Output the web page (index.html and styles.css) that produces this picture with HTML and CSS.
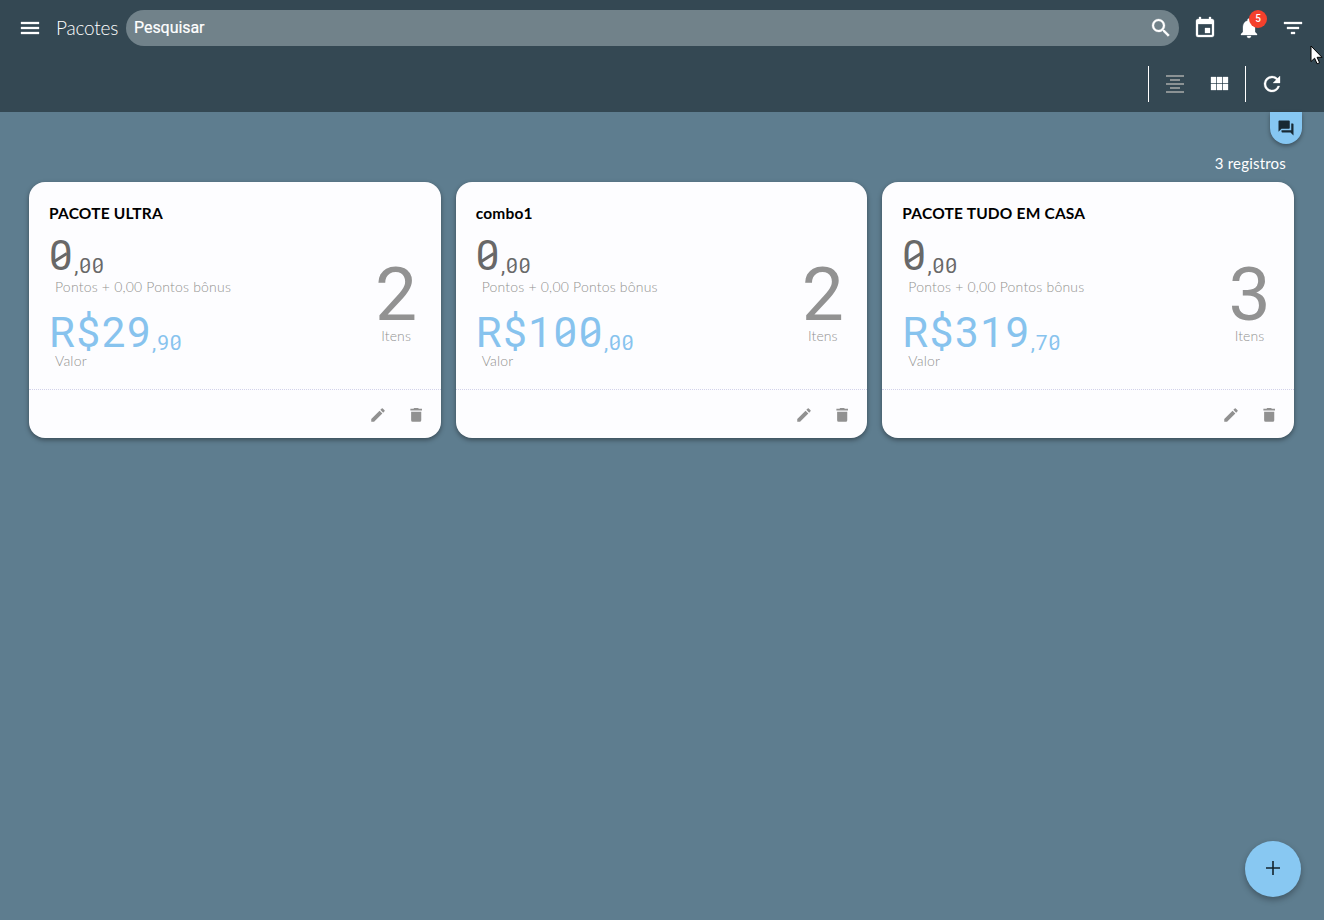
FILE: index.html
```html
<!DOCTYPE html>
<html lang="pt-BR">
<head>
<meta charset="utf-8">
<title>Pacotes</title>
<link rel="stylesheet" href="styles.css">
</head>
<body>
<svg class="defs" aria-hidden="true">
  <symbol id="edit" viewBox="0 0 24 24"><path d="M3 17.25V21h3.75L17.81 9.94l-3.75-3.75L3 17.25zM20.71 7.04a1 1 0 0 0 0-1.41l-2.34-2.34a1 1 0 0 0-1.41 0l-1.83 1.83 3.75 3.75 1.83-1.83z"/></symbol>
  <symbol id="trash" viewBox="0 0 24 24"><path d="M5.500 7.500V19a2 2 0 0 0 2 2h9.500a2 2 0 0 0 2-2V7.500zM20 3.800h-4.200l-1-1.300h-5.200l-1 1.300H4.500v2.200H20z"/></symbol>
</svg>
<header class="header">
  <div class="topbar">
    <svg class="icon menu" viewBox="0 0 24 24"><path d="M3 18h18v-2H3v2zm0-5h18v-2H3v2zm0-7v2h18V6H3z"/></svg>
    <h1 class="title">Pacotes</h1>
    <div class="search"><span class="placeholder">Pesquisar</span>
      <svg class="icon" viewBox="0 0 24 24"><path d="M15.5 14h-.79l-.28-.27A6.47 6.47 0 0 0 16 9.500 6.500 6.500 0 1 0 9.500 16c1.610 0 3.090-.590 4.230-1.570l.27.28v.79l5 4.990L20.490 19l-4.990-5zm-6 0C7.010 14 5 11.990 5 9.500S7.010 5 9.500 5 14 7.010 14 9.500 11.990 14 9.500 14z"/></svg>
    </div>
    <div class="actions">
      <svg class="icon" viewBox="0 0 24 24"><path d="M17 12h-5v5h5v-5zM16 1v2H8V1H6v2H5c-1.110 0-1.990.9-1.990 2L3 19a2 2 0 0 0 2 2h14c1.100 0 2-.9 2-2V5c0-1.100-.9-2-2-2h-1V1h-2zm3 18H5V8h14v11z"/></svg>
      <div class="bell"><svg class="icon" viewBox="0 0 24 24"><path d="M12 22c1.100 0 2-.9 2-2h-4a2 2 0 0 0 2 2zm6-6v-5c0-3.070-1.640-5.640-4.500-6.320V4a1.500 1.500 0 0 0-3 0v.68C7.630 5.360 6 7.920 6 11v5l-2 2v1h16v-1l-2-2z"/></svg><span class="badge">5</span></div>
      <svg class="icon" viewBox="0 0 24 24"><path d="M10 18h4v-2h-4v2zM3 6v2h18V6H3zm3 7h12v-2H6v2z"/></svg>
    </div>
  </div>
  <div class="toolbar">
    <span class="rule"></span>
    <svg class="icon dim" viewBox="0 0 24 24"><path d="M3 3h18v2H3zM7 7h10v2H7zM3 11h18v2H3zM7 15h10v2H7zM3 19h18v2H3z"/></svg>
    <svg class="icon grid" viewBox="0 0 24 24"><path d="M4 11h5V5H4v6zm0 7h5v-6H4v6zm6 0h5v-6h-5v6zm6 0h5v-6h-5v6zm-6-7h5V5h-5v6zm6-6v6h5V5h-5z"/></svg>
    <span class="rule second"></span>
    <svg class="icon" viewBox="0 0 24 24"><path d="M17.650 6.350A7.958 7.958 0 0 0 12 4a8 8 0 1 0 7.730 10h-2.080A5.990 5.990 0 0 1 12 18a6 6 0 1 1 0-12c1.660 0 3.140.69 4.220 1.780L13 11h7V4l-2.350 2.350z"/></svg>
  </div>
</header>
<main class="content">
  <div class="chatrow"><button class="chat" aria-label="Chat"><svg viewBox="0 0 24 24"><path d="M21 6h-2v9H6v2c0 .55.450 1 1 1h11l4 4V7c0-.55-.450-1-1-1zm-4 6V3c0-.55-.450-1-1-1H3c-.55 0-1 .450-1 1v14l4-4h10c.55 0 1-.450 1-1z"/></svg></button></div>
  <p class="count">3 registros</p>
  <section class="cards">
    <article class="card">
      <div class="body">
        <h2>PACOTE ULTRA</h2>
        <div class="cols">
          <div class="values">
            <div class="amount points"><span class="int"><span class="z">0</span></span><span class="dec">,<span class="z">0</span><span class="z">0</span></span></div>
            <div class="label">Pontos + 0,00 Pontos bônus</div>
            <div class="amount price"><span class="int">R$29</span><span class="dec">,9<span class="z">0</span></span></div>
            <div class="label short">Valor</div>
          </div>
          <div class="items"><div class="num">2</div><div class="itens">Itens</div></div>
        </div>
      </div>
      <footer><svg><use href="#edit"/></svg><svg><use href="#trash"/></svg></footer>
    </article>
    <article class="card">
      <div class="body">
        <h2>combo1</h2>
        <div class="cols">
          <div class="values">
            <div class="amount points"><span class="int"><span class="z">0</span></span><span class="dec">,<span class="z">0</span><span class="z">0</span></span></div>
            <div class="label">Pontos + 0,00 Pontos bônus</div>
            <div class="amount price"><span class="int">R$1<span class="z">0</span><span class="z">0</span></span><span class="dec">,<span class="z">0</span><span class="z">0</span></span></div>
            <div class="label short">Valor</div>
          </div>
          <div class="items"><div class="num">2</div><div class="itens">Itens</div></div>
        </div>
      </div>
      <footer><svg><use href="#edit"/></svg><svg><use href="#trash"/></svg></footer>
    </article>
    <article class="card">
      <div class="body">
        <h2>PACOTE TUDO EM CASA</h2>
        <div class="cols">
          <div class="values">
            <div class="amount points"><span class="int"><span class="z">0</span></span><span class="dec">,<span class="z">0</span><span class="z">0</span></span></div>
            <div class="label">Pontos + 0,00 Pontos bônus</div>
            <div class="amount price"><span class="int">R$319</span><span class="dec">,7<span class="z">0</span></span></div>
            <div class="label short">Valor</div>
          </div>
          <div class="items"><div class="num">3</div><div class="itens">Itens</div></div>
        </div>
      </div>
      <footer><svg><use href="#edit"/></svg><svg><use href="#trash"/></svg></footer>
    </article>
  </section>
</main>
<button class="fab" aria-label="Adicionar"><svg viewBox="0 0 24 24"><path d="M19 12.800h-6.200V19h-1.600v-6.200H5v-1.600h6.200V5h1.600v6.200H19z"/></svg></button>
<svg class="cursor" viewBox="0 0 13 20"><path d="M1 1v15.500l3.600-3.300 2.500 5.600 2.500-1.100-2.500-5.400H12z" fill="#fff" stroke="#000"/></svg>
</body>
</html>
```
FILE: styles.css
```css
* { box-sizing: border-box; }
body { margin: 0; min-height: 920px; overflow: hidden; background: #5e7d8f; font-family: Lato, sans-serif; color: #fff; }
h1, h2, p { margin: 0; }
button { border: 0; padding: 0; }
.defs { display: none; }
.header { height: 112px; background: #344853; }
.topbar { height: 56px; display: flex; align-items: center; padding: 0 19px 0 18px; }
.icon { width: 24px; height: 24px; fill: #fff; stroke: #fff; stroke-width: .3; flex: none; display: block; }
.title { width: 62px; margin-left: 14px; font-size: 19px; font-weight: 300; line-height: 24px; white-space: nowrap; letter-spacing: -.2px; }
.search { flex: 1; height: 36px; margin-left: 8px; margin-right: 14px; border-radius: 18px; background: #71828a; display: flex; align-items: center; justify-content: space-between; padding: 0 6px 0 8px; font: 400 16px/20px Roboto, sans-serif; }
.placeholder { letter-spacing: -.05px; -webkit-text-stroke: .2px #fff; }
.actions { display: flex; gap: 20px; }
.bell { position: relative; }
.badge { position: absolute; left: 12px; top: -6px; width: 18px; height: 18px; border-radius: 50%; background: #f4402c; font: 500 10px/18px Roboto, sans-serif; text-align: center; }
.toolbar { height: 56px; display: flex; align-items: center; justify-content: flex-end; padding-right: 40px; }
.rule { width: 1px; height: 36px; background: #fff; margin-right: 14px; }
.rule.second { margin: 0 14px; }
.dim { fill: #8b9294; stroke: none; }
.grid { margin-left: 20px; }
.chatrow { height: 32px; display: flex; justify-content: flex-end; padding-right: 22px; }
.chat { width: 32px; height: 32px; border-radius: 0 0 16px 16px; background: #86c7f2; display: grid; place-items: center; box-shadow: 0 2px 4px rgba(0,0,0,.35); }
.chat svg { width: 18px; height: 18px; fill: #182a34; }
.count { height: 38px; padding: 9px 38px 0 0; text-align: right; font: 400 15px/20px Lato, sans-serif; letter-spacing: .2px; }
.cards { display: grid; grid-template-columns: repeat(3, 1fr); gap: 15px; padding: 0 30px 0 29px; }
.card { height: 256px; border-radius: 16px; background: #fdfdff; box-shadow: 0 2px 5px rgba(0,0,0,.4); }
.body { height: 208px; padding: 20px 20px 0; border-bottom: 1px dotted #d2d2ea; }
.card h2 { height: 23px; font-size: 15.500px; font-weight: 700; line-height: 22px; color: #000; white-space: nowrap; letter-spacing: .2px; }
.cols { display: flex; justify-content: space-between; }
.amount { font-family: Roboto, sans-serif; white-space: nowrap; display: flex; align-items: baseline; }
.points { height: 52px; line-height: 61px; color: #686868; }
.price { height: 52px; line-height: 57px; color: #87c3ee; margin-top: 7px; }
.int { font-size: 42px; font-weight: 400; letter-spacing: 1.600px; }
.dec { font-size: 21px; font-weight: 400; letter-spacing: .9px; position: relative; top: 3px; }
/* Slashed zero */
.z { position: relative; display: inline-block; line-height: 1; }
.z::after { content: ""; position: absolute; left: .1em; top: .49em; width: .36em; height: .066em; background: currentColor; transform: rotate(-33deg); }
.label { padding-left: 6px; color: #92928f; font-size: 14px; font-weight: 300; line-height: 20px; white-space: nowrap; letter-spacing: .2px; }
.short { margin-top: -5px; }
.items { width: 49px; text-align: center; padding-top: 29px; color: #929292; }
.num { font: 400 75px/80px Roboto, sans-serif; height: 73px; }
.itens { font-size: 14px; font-weight: 300; line-height: 18px; letter-spacing: .1px; }
footer { height: 48px; display: flex; justify-content: flex-end; align-items: center; gap: 20px; padding-right: 16px; padding-top: 2px; }
footer svg { width: 18px; height: 18px; fill: #919191; }
.fab { position: fixed; left: 1245px; top: 841px; width: 56px; height: 56px; border-radius: 50%; background: #88c8f2; display: grid; place-items: center; box-shadow: 0 3px 6px rgba(0,0,0,.3); }
.fab svg { width: 24px; height: 24px; fill: #13232c; margin-bottom: 2px; }
.cursor { position: absolute; left: 1310px; top: 45px; width: 13px; height: 20px; }
```
